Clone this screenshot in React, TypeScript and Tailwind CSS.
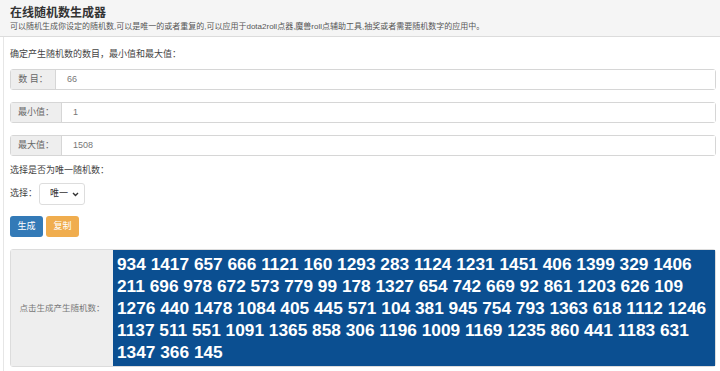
import React from 'react';

const lines = [
  '934 1417 657 666 1121 160 1293 283 1124 1231 1451 406 1399 329 1406',
  '211 696 978 672 573 779 99 178 1327 654 742 669 92 861 1203 626 109',
  '1276 440 1478 1084 405 445 571 104 381 945 754 793 1363 618 1112 1246',
  '1137 511 551 1091 1365 858 306 1196 1009 1169 1235 860 441 1183 631',
  '1347 366 145',
];

const Field: React.FC<{ label: string; value: string; w: string }> = ({ label, value, w }) => (
  <div className="flex h-[21px] rounded-[3px] border border-[#d6d6d6]">
    <div className={`${w} flex items-center justify-center border-r border-[#d6d6d6] bg-[#eeeeee] text-[9px] text-[#666]`}>
      {label}
    </div>
    <div className="flex flex-1 items-center bg-white pl-[11px] text-[9px] text-[#777]">{value}</div>
  </div>
);

export default function App() {
  return (
    <div
      className="h-[371px] w-[720px] overflow-hidden bg-white text-[#333]"
      style={{ fontFamily: '"Liberation Sans", "Noto Sans CJK SC", sans-serif' }}
    >
      <div className="h-[37px] border-b border-[#dcdcdc] bg-[#f5f5f5] pl-[10px] pt-[5px]">
        <div className="text-[12px] font-bold leading-[16px] text-[#333]">在线随机数生成器</div>
        <div className="text-[8px] leading-[12px] text-[#555]">
          可以随机生成你设定的随机数,可以是唯一的或者重复的,可以应用于dota2roll点器,魔兽roll点辅助工具,抽奖或者需要随机数字的应用中。
        </div>
      </div>
      <div className="ml-[3px] h-[334px] border-l border-[#e6e6e6] pl-[6px] pr-[4px]">
        <div className="pt-[11px] text-[9px] leading-[12px] text-[#444]">确定产生随机数的数目，最小值和最大值：</div>
        <div className="mt-[9px] flex flex-col gap-[12px]">
          <Field label="数 目：" value="66" w="w-[45px]" />
          <Field label="最小值：" value="1" w="w-[51px]" />
          <Field label="最大值：" value="1508" w="w-[51px]" />
        </div>
        <div className="mt-[8px] text-[9px] leading-[12px] text-[#444]">选择是否为唯一随机数：</div>
        <div className="mt-[7px] flex items-center gap-[2px]">
          <span className="text-[9px] text-[#444]">选择：</span>
          <div className="flex h-[22px] w-[46px] items-center justify-between rounded-[3px] border border-[#ddd] bg-white pl-[10px] pr-[5px] text-[9px] text-[#333]">
            <span>唯一</span>
            <svg width="7" height="5" viewBox="0 0 7 5">
              <path d="M1 1l2.5 2.5L6 1" fill="none" stroke="#333" strokeWidth="1.4" />
            </svg>
          </div>
        </div>
        <div className="mt-[11px] flex gap-[3px]">
          <div className="flex h-[21px] w-[33px] items-center justify-center rounded-[3px] bg-[#337ab7] text-[9px] text-white">
            生成
          </div>
          <div className="flex h-[21px] w-[33px] items-center justify-center rounded-[3px] bg-[#f0ad4e] text-[9px] text-white">
            复制
          </div>
        </div>
        <div className="mt-[12px] flex h-[118px] rounded-[3px] border border-[#dcdcdc]">
          <div className="flex w-[102px] items-center justify-center bg-[#eeeeee] text-[8.5px] text-[#777]">
            点击生成产生随机数：
          </div>
          <div
            className="flex-1 whitespace-nowrap bg-[#0b4f91] pl-[4px] pr-[2px] pt-[3px] text-[17.3px] font-bold leading-[22px] text-white"
            style={{ fontFamily: '"Liberation Sans", Arial, sans-serif' }}
          >
            {lines.map((l) => (
              <div key={l}>{l}</div>
            ))}
          </div>
        </div>
      </div>
    </div>
  );
}
